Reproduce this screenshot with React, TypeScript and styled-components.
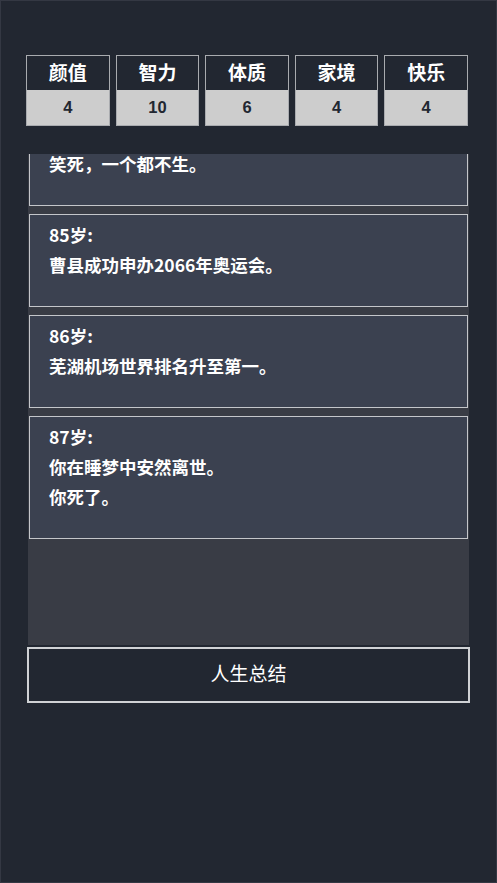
import React, { useLayoutEffect, useRef } from "react";
import styled, { createGlobalStyle } from "styled-components";

const Global = createGlobalStyle`
  html, body { margin: 0; padding: 0; background: #222731; }
  body { font-family: "Noto Sans CJK SC", "Noto Sans", "Liberation Sans", sans-serif; }
  * { box-sizing: border-box; }
`;

const Page = styled.div`
  width: 497px;
  height: 883px;
  background: #222731;
  border: 1px solid #343843;
  display: flex;
  flex-direction: column;
  padding: 54px 26px 0 26px;
`;

const AttrRow = styled.div`
  display: grid;
  grid-template-columns: repeat(5, 1fr);
  gap: 6px;
  margin: 0 2px 0 -1px;
`;

const AttrBox = styled.div`
  border: 1.5px solid #a9abaf;
  display: flex;
  flex-direction: column;
`;

const AttrLabel = styled.div`
  height: 34px;
  display: flex;
  align-items: center;
  justify-content: center;
  padding-bottom: 3px;
  background: #222731;
  color: #ffffff;
  font-weight: 700;
  font-size: 19px;
  line-height: 1;
`;

const AttrValue = styled.div`
  height: 35px;
  display: flex;
  align-items: center;
  justify-content: center;
  background: #cdcdcd;
  color: #222731;
  font-weight: 700;
  font-size: 16.5px;
  line-height: 1;
  font-family: "Liberation Sans", "Noto Sans CJK SC", sans-serif;
`;

const List = styled.div`
  margin: 28px 1px 0 1px;
  height: 491px;
  background: #393c45;
  overflow-y: auto;
  scrollbar-width: none;
  display: flex;
  flex-direction: column;
  gap: 8px;
  padding: 0 1px 200px 1px;
  &::-webkit-scrollbar { display: none; }
`;

const Card = styled.div`
  flex: none;
  background: #3b4150;
  border: 1.5px solid #c4c6ca;
  padding: 5px 19px 26px 19px;
  color: #ffffff;
  font-weight: 700;
  font-size: 17.5px;
  line-height: 30px;
`;

const Line = styled.div`
  white-space: nowrap;
`;

const SummaryButton = styled.button`
  margin-top: 2px;
  height: 56px;
  width: 100%;
  padding: 0 0 5px 0;
  background: #222731;
  border: 2px solid #d0d2d5;
  color: #ffffff;
  font-family: "Noto Sans CJK SC", "Noto Sans", sans-serif;
  font-size: 19px;
  font-weight: 400;
  line-height: 1;
  cursor: pointer;
`;

const attrs = [
  { label: "颜值", value: 4 },
  { label: "智力", value: 10 },
  { label: "体质", value: 6 },
  { label: "家境", value: 4 },
  { label: "快乐", value: 4 },
];

const events: string[][] = [
  ["笑死，一个都不生。"],
  ["85岁:", "曹县成功申办2066年奥运会。"],
  ["86岁:", "芜湖机场世界排名升至第一。"],
  ["87岁:", "你在睡梦中安然离世。", "你死了。"],
];

export default function App() {
  const listRef = useRef<HTMLDivElement>(null);
  const firstRef = useRef<HTMLDivElement>(null);

  useLayoutEffect(() => {
    const list = listRef.current;
    const first = firstRef.current;
    if (list && first) {
      list.scrollTop = first.offsetHeight - 52;
    }
  }, []);

  return (
    <>
      <Global />
      <Page>
        <AttrRow>
          {attrs.map((a) => (
            <AttrBox key={a.label}>
              <AttrLabel>{a.label}</AttrLabel>
              <AttrValue>{a.value}</AttrValue>
            </AttrBox>
          ))}
        </AttrRow>
        <List ref={listRef}>
          {events.map((lines, i) => (
            <Card key={i} ref={i === 0 ? firstRef : undefined}>
              {lines.map((l, j) => (
                <Line key={j}>{l}</Line>
              ))}
            </Card>
          ))}
        </List>
        <SummaryButton>人生总结</SummaryButton>
      </Page>
    </>
  );
}
